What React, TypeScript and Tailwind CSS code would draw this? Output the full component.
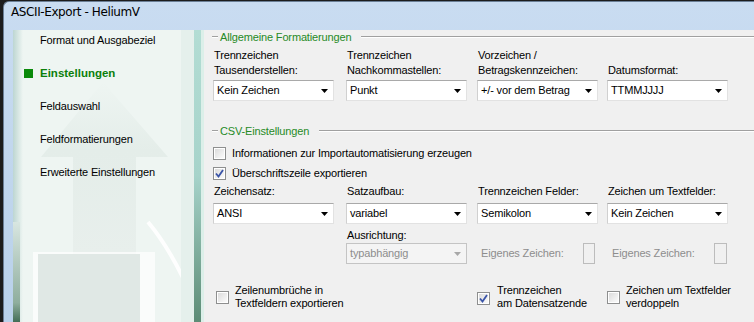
import React from 'react';

// Small down arrow used in the combo boxes
const Arrow: React.FC<{ disabled?: boolean }> = ({ disabled }) => (
  <svg width="7" height="4" viewBox="0 0 7 4">
    <path d="M0 0 H7 L3.5 4 Z" fill={disabled ? '#a8a8a8' : '#000'} />
  </svg>
);

const Select: React.FC<{ value: string; disabled?: boolean }> = ({ value, disabled }) => (
  <div
    className={
      'w-[121px] h-[21px] flex items-center justify-between pl-[3px] pr-[5px] border ' +
      (disabled
        ? 'bg-[#f4f4f4] border-[#c4c4c4] text-[#8d8d8d]'
        : 'bg-white border-[#e2e2e2] border-t-[#a9a9a9] border-l-[#d0d0d0]')
    }
  >
    <span className="whitespace-nowrap">{value}</span>
    <Arrow disabled={disabled} />
  </div>
);

const Checkbox: React.FC<{ checked?: boolean }> = ({ checked }) => (
  <div className="w-[13px] h-[13px] shrink-0 border border-[#8e8f8f] bg-white p-[1px]">
    <div className="w-full h-full bg-gradient-to-br from-[#dcdcdc] to-[#fbfbfb] flex items-center justify-center">
      {checked && (
        <svg width="9" height="9" viewBox="0 0 9 9">
          <path d="M1 4.5 L3.5 7.5 L8 1" stroke="#3a54a8" strokeWidth="1.8" fill="none" />
        </svg>
      )}
    </div>
  </div>
);

const GroupHeader: React.FC<{ title: string }> = ({ title }) => (
  <div className="flex items-center h-[14px]">
    <div className="w-[6px] h-[2px] border-t border-[#a0a0a0] border-b border-b-white" />
    <span className="px-[2px] text-[#268a26] whitespace-nowrap">{title}</span>
    <div className="flex-1 ml-[8px] h-[2px] border-t border-[#a0a0a0] border-b border-b-white" />
  </div>
);

const Field: React.FC<{ label: string[]; value: string }> = ({ label, value }) => (
  <div className="flex flex-col">
    <div className="h-[30px] flex flex-col justify-end leading-[15px] pl-[1px]">
      {label.map((l) => (
        <div key={l} className="whitespace-nowrap">{l}</div>
      ))}
    </div>
    <div className="mt-[2px]">
      <Select value={value} />
    </div>
  </div>
);

const navItems = [
  'Format und Ausgabeziel',
  'Einstellungen',
  'Feldauswahl',
  'Feldformatierungen',
  'Erweiterte Einstellungen',
];

const App: React.FC = () => {
  return (
    <div className="w-[754px] h-[322px] overflow-hidden bg-[#1c1c1c] pl-[3px] pt-[1px] font-['Liberation_Sans',Arial,sans-serif] text-[11px] tracking-[-0.15px] text-black">
      <div className="h-full flex flex-col rounded-tl-[6px] bg-gradient-to-b from-[#c9dcf1] to-[#b9d1ea] border-t border-l border-[#6b7f96]">
        {/* Title bar */}
        <div className="h-[28px] shrink-0 flex items-center pl-[7px] pb-[8px] text-[12px] leading-[14px] text-black font-['DejaVu_Sans',sans-serif] tracking-[-0.4px]">
          ASCII-Export - HeliumV
        </div>

        <div className="flex-1 min-h-0 flex pl-[9px]">
          {/* Left wizard panel */}
          <div className="relative w-[181px] h-full bg-[#eef5f2] overflow-hidden">
            <svg className="absolute inset-0" width="181" height="293" viewBox="0 0 181 293">
              <defs>
                <linearGradient id="strip" x1="0" x2="1" y1="0" y2="0">
                  <stop offset="0" stopColor="#bdd6d2" />
                  <stop offset="1" stopColor="#eef5f2" />
                </linearGradient>
                <linearGradient id="arrow" x1="0" x2="0" y1="0" y2="1">
                  <stop offset="0" stopColor="#eef5f2" />
                  <stop offset="0.4" stopColor="#e4ede9" />
                  <stop offset="1" stopColor="#e8efec" />
                </linearGradient>
                <linearGradient id="bottomStrip" x1="0" x2="0" y1="0" y2="1">
                  <stop offset="0" stopColor="#d8e6e1" />
                  <stop offset="0.8" stopColor="#8fae9e" />
                  <stop offset="1" stopColor="#3f6a52" />
                </linearGradient>
              </defs>
              <rect x="0" y="0" width="10" height="293" fill="url(#strip)" />
              <rect x="0" y="192" width="7" height="101" fill="url(#bottomStrip)" />
              <path d="M90 52 L155 127 L123 127 L123 224 L60 224 L60 127 L28 127 Z" fill="url(#arrow)" />
              <rect x="20" y="222" width="122" height="71" fill="#ffffff" opacity="0.7" />
              <rect x="25" y="224" width="102" height="69" fill="#e0e8e5" />
              <path d="M135 192 Q160 222 181 272" stroke="#ffffff" strokeWidth="4" fill="none" opacity="0.9" />
              <rect x="168" y="0" width="13" height="293" fill="#e5f0ec" />
            </svg>
            <div className="relative flex flex-col gap-[17px] pt-[2px]">
              {navItems.map((item) => (
                <div key={item} className="h-[16px] leading-[16px] flex items-center">
                  {item === 'Einstellungen' ? (
                    <>
                      <div className="w-[9px] h-[9px] bg-[#0a8a0a] ml-[11px] mr-[7px]" />
                      <span className="font-bold text-[#0b7f0b] text-[11.5px] tracking-[0px]">{item}</span>
                    </>
                  ) : (
                    <span className="pl-[27px] whitespace-nowrap">{item}</span>
                  )}
                </div>
              ))}
            </div>
          </div>

          {/* Separator band */}
          <div className="w-[7px] h-full bg-gradient-to-b from-[#b3ddd4] via-[#a6d3ca] to-[#5d8c76]" />
          <div className="w-[3px] h-full bg-[#dcefe9]" />

          {/* Content */}
          <div className="flex-1 h-full bg-[#f0f0f0] pl-[8px]">
            <GroupHeader title="Allgemeine Formatierungen" />
            <div className="grid grid-cols-[133px_131px_130px_121px] mt-[4px] pl-[1px]">
              <Field label={['Trennzeichen', 'Tausenderstellen:']} value="Kein Zeichen" />
              <Field label={['Trennzeichen', 'Nachkommastellen:']} value="Punkt" />
              <Field label={['Vorzeichen /', 'Betragskennzeichen:']} value="+/- vor dem Betrag" />
              <Field label={['Datumsformat:']} value="TTMMJJJJ" />
            </div>

            <div className="mt-[23px]">
              <GroupHeader title="CSV-Einstellungen" />
            </div>
            <div className="flex items-center gap-[6px] mt-[9px] pl-[1px] h-[13px]">
              <Checkbox />
              <span>Informationen zur Importautomatisierung erzeugen</span>
            </div>
            <div className="flex items-center gap-[6px] mt-[7px] pl-[1px] h-[13px]">
              <Checkbox checked />
              <span>Überschriftszeile exportieren</span>
            </div>

            <div className="grid grid-cols-[133px_131px_130px_121px] mt-[4px] pl-[1px]">
              {[
                ['Zeichensatz:', 'ANSI'],
                ['Satzaufbau:', 'variabel'],
                ['Trennzeichen Felder:', 'Semikolon'],
                ['Zeichen um Textfelder:', 'Kein Zeichen'],
              ].map(([l, v]) => (
                <div key={l} className="flex flex-col">
                  <div className="h-[15px] leading-[15px] pl-[1px] whitespace-nowrap">{l}</div>
                  <div className="mt-[4px]">
                    <Select value={v} />
                  </div>
                </div>
              ))}
            </div>

            <div className="grid grid-cols-[133px_131px_130px_121px] mt-[4px] pl-[1px]">
              <div />
              <div className="flex flex-col">
                <div className="h-[15px] leading-[15px] pl-[1px]">Ausrichtung:</div>
                <Select value="typabhängig" disabled />
              </div>
              <div className="flex items-end">
                <div className="w-[106px] h-[21px] flex items-center pl-[4px] text-[#8d8d8d] whitespace-nowrap">
                  Eigenes Zeichen:
                </div>
                <div className="w-[12px] h-[21px] border border-[#bcbcbc] bg-[#f0f0f0]" />
              </div>
              <div className="flex items-end">
                <div className="w-[107px] h-[21px] flex items-center pl-[5px] text-[#8d8d8d] whitespace-nowrap">
                  Eigenes Zeichen:
                </div>
                <div className="w-[13px] h-[21px] border border-[#bcbcbc] bg-[#f0f0f0]" />
              </div>
            </div>

            <div className="grid grid-cols-[264px_130px_121px] mt-[20px] pl-[1px]">
              <div className="flex items-center pl-[3px] gap-[6px]">
                <Checkbox />
                <div className="leading-[13px] whitespace-nowrap">
                  <div>Zeilenumbrüche in</div>
                  <div>Textfeldern exportieren</div>
                </div>
              </div>
              <div className="flex items-center gap-[7px]">
                <div className="mt-[3px]">
                  <Checkbox checked />
                </div>
                <div className="leading-[13px] whitespace-nowrap">
                  <div>Trennzeichen</div>
                  <div>am Datensatzende</div>
                </div>
              </div>
              <div className="flex items-center gap-[6px]">
                <Checkbox />
                <div className="leading-[13px] whitespace-nowrap">
                  <div>Zeichen um Textfelder</div>
                  <div>verdoppeln</div>
                </div>
              </div>
            </div>
          </div>
        </div>
      </div>
    </div>
  );
};

export default App;
